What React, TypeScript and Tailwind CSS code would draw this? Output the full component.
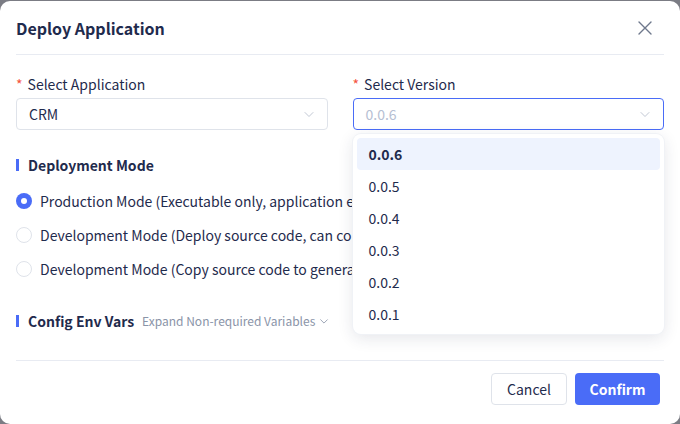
import { useState } from "react"

const versions = ["0.0.6", "0.0.5", "0.0.4", "0.0.3", "0.0.2", "0.0.1"]

const modes = [
  "Production Mode (Executable only, application environment is isolated and read-only)",
  "Development Mode (Deploy source code, can continue development on the server)",
  "Development Mode (Copy source code to generate a new application)",
]

function Chevron({ className }: { className?: string }) {
  return (
    <svg viewBox="0 0 12 12" className={className} fill="none" stroke="currentColor" strokeWidth="1" strokeLinecap="round" strokeLinejoin="round">
      <path d="M2 4.5 6 8.5 10 4.5" />
    </svg>
  )
}

function SectionTitle({ children }: { children: React.ReactNode }) {
  return (
    <div className="flex items-center gap-[9px]">
      <span className="h-3 w-[3px] bg-[#4a6cf7]" />
      <span className="text-sm font-semibold text-[#1f2b4d]">{children}</span>
    </div>
  )
}

export default function App() {
  const [mode, setMode] = useState(0)
  const [version] = useState("0.0.6")

  return (
    <div className="h-[424px] w-[680px] overflow-hidden bg-[#7b7c84] pt-px font-['Noto_Sans_CJK_SC','Noto_Sans',sans-serif]">
      <div className="relative h-[423px] rounded-[10px] bg-white">
        <div className="mx-4 flex h-[54px] items-center justify-between border-b border-[#e8ebf2]">
          <h2 className="text-base font-semibold text-[#1f2b4d]">Deploy Application</h2>
          <svg viewBox="0 0 16 16" className="mr-[11px] h-4 w-4 text-[#6e788c]" fill="none" stroke="currentColor" strokeWidth="1.4" strokeLinecap="round">
            <path d="M2 2 14 14M14 2 2 14" />
          </svg>
        </div>

        <div className="px-4 pt-[19px]">
          <div className="grid grid-cols-2 gap-x-[25px]">
            <div>
              <label className="flex h-5 items-center text-sm text-[#1f2b4d]">
                <span className="mr-[5px] text-[#f5533d]">*</span>Select Application
              </label>
              <div className="mt-1 flex h-8 items-center justify-between rounded border border-[#dfe3ea] px-3 text-sm text-[#1f2b4d]">
                <span>CRM</span>
                <Chevron className="h-3 w-3 text-[#c2c8d4]" />
              </div>
            </div>
            <div className="relative">
              <label className="flex h-5 items-center text-sm text-[#1f2b4d]">
                <span className="mr-[5px] text-[#f5533d]">*</span>Select Version
              </label>
              <div className="mt-1 flex h-8 items-center justify-between rounded border border-[#4a6cf7] px-3 text-sm text-[#b6c0d3]">
                <span>{version}</span>
                <Chevron className="h-3 w-3 text-[#c2c8d4]" />
              </div>
              <div className="absolute left-0 right-0 top-[60px] z-10 rounded-lg bg-white p-1 shadow-[0_4px_16px_rgba(30,40,70,0.12)] ring-1 ring-[#f0f2f6]">
                {versions.map((v) => (
                  <div
                    key={v}
                    className={
                      v === version
                        ? "flex h-8 items-center rounded bg-[#eef3fe] px-3 text-sm font-bold text-[#1f2b4d]"
                        : "flex h-8 items-center rounded px-3 text-sm text-[#1f2b4d]"
                    }
                  >
                    {v}
                  </div>
                ))}
              </div>
            </div>
          </div>

          <div className="mt-[25px]">
            <SectionTitle>Deployment Mode</SectionTitle>
            <div className="mt-[9px]">
              {modes.map((m, i) => (
                <div key={m} className="flex h-[34px] max-w-[336px] items-center gap-2 overflow-hidden whitespace-nowrap" onClick={() => setMode(i)}>
                  {mode === i ? (
                    <span className="flex h-4 w-4 shrink-0 items-center justify-center rounded-full bg-[#4a6cf7]">
                      <span className="h-1.5 w-1.5 rounded-full bg-white" />
                    </span>
                  ) : (
                    <span className="h-4 w-4 shrink-0 rounded-full border border-[#dfe3ea] bg-white" />
                  )}
                  <span className="text-sm text-[#1f2b4d]">{m}</span>
                </div>
              ))}
            </div>
          </div>

          <div className="mt-[25px] flex items-center">
            <SectionTitle>Config Env Vars</SectionTitle>
            <span className="ml-2 flex items-center gap-1 text-xs text-[#8a94a8]">
              Expand Non-required Variables
              <Chevron className="h-2.5 w-2.5" />
            </span>
          </div>
        </div>

        <div className="mx-4 mt-[29px] flex justify-end gap-2 border-t border-[#e8ebf2] pt-[12px]">
          <button className="h-8 w-[76px] rounded border border-[#dfe3ea] bg-white text-sm text-[#1f2b4d]">Cancel</button>
          <button className="mr-[4px] h-8 w-[85px] rounded bg-[#4a6cf7] text-sm font-semibold text-white">Confirm</button>
        </div>
      </div>
    </div>
  )
}
